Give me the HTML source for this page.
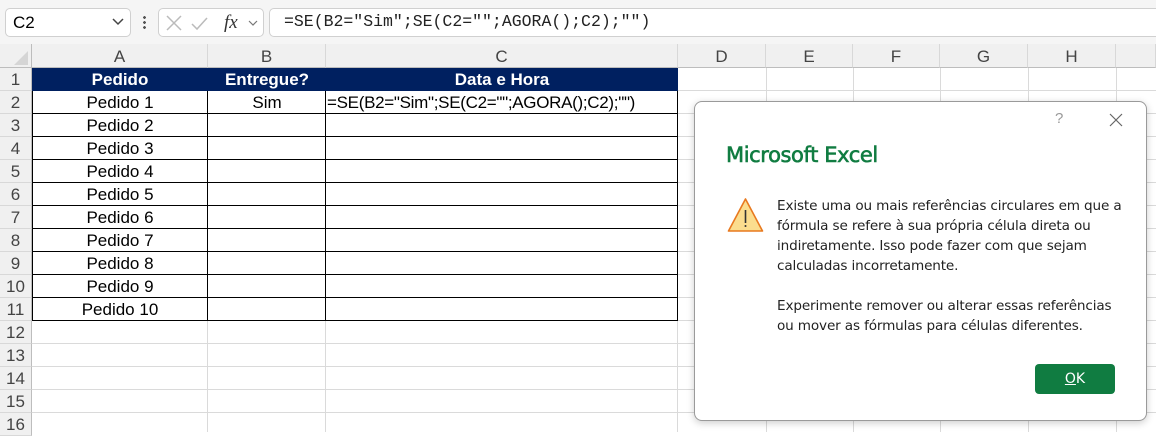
<!DOCTYPE html>
<html><head><meta charset="utf-8"><style>
*{margin:0;padding:0;box-sizing:border-box}
body{width:1156px;height:432px;overflow:hidden;background:#fff;font-family:"Liberation Sans",Arial,sans-serif;position:relative}
.abs{position:absolute}
.top{left:0;top:0;width:1156px;height:44px;background:#f5f5f5}
.box{background:#fff;border:1px solid #d0d0d0;border-radius:5px}
.colh{top:44px;height:24px;background:#f0f0f0;border-bottom:1px solid #bdbdbd;font-size:17px;color:#444;text-align:center;line-height:26px;border-right:1px solid #d8d8d8}
.rowh{left:0;width:32px;height:23px;background:#f0f0f0;border-bottom:1px solid #d8d8d8;border-right:1px solid #bdbdbd;font-size:17px;color:#444;text-align:center;line-height:23px}
.vl{top:68px;width:1px;height:364px;background:#dadada}
.hl{left:32px;width:1124px;height:1px;background:#dadada}
.cell{height:23px;font-size:17px;line-height:23px;text-align:center;color:#000}
</style></head><body>
<div class="abs top"></div>
<div class="abs box" style="left:5px;top:8px;width:126px;height:29px"></div>
<div class="abs" style="left:13px;top:13px;font-size:17px">C2</div>
<svg class="abs" style="left:112px;top:18px" width="12" height="8"><path d="M1 1l5 5 5-5" stroke="#444" stroke-width="1.5" fill="none"/></svg>
<div class="abs" style="left:143px;top:15px;width:3px;height:15px;background:radial-gradient(circle,#555 1.3px,transparent 1.5px) 0 0/3px 5px"></div>
<div class="abs box" style="left:158px;top:8px;width:106px;height:29px"></div>
<svg class="abs" style="left:164px;top:13px" width="100" height="20"><path d="M3 3l14 14M17 3L3 17" stroke="#bbb" stroke-width="1.5"/><path d="M28 11l5 5 10-11" stroke="#bbb" stroke-width="1.5" fill="none"/><text x="60" y="15" font-family="Liberation Serif" font-style="italic" font-size="19" fill="#333">fx</text><path d="M85 8l4 4 4-4" stroke="#777" stroke-width="1.2" fill="none"/></svg>
<div class="abs box" style="left:269px;top:8px;width:900px;height:29px"></div>
<div class="abs" style="left:284px;top:12px;font-family:'Liberation Mono',monospace;font-size:16.5px;color:#222">=SE(B2="Sim";SE(C2="";AGORA();C2);"")</div>
<div class="abs" style="left:0;top:44px;width:32px;height:24px;background:#f0f0f0;border-right:1px solid #bdbdbd;border-bottom:1px solid #bdbdbd"></div>
<svg class="abs" style="left:14px;top:51px" width="14" height="14"><path d="M14 0V14H0z" fill="#d5d5d5"/></svg>
<div class="abs colh" style="left:32px;width:176px">A</div>
<div class="abs colh" style="left:208px;width:118px">B</div>
<div class="abs colh" style="left:326px;width:352px">C</div>
<div class="abs colh" style="left:678px;width:88px">D</div>
<div class="abs colh" style="left:766px;width:87px">E</div>
<div class="abs colh" style="left:853px;width:87px">F</div>
<div class="abs colh" style="left:940px;width:88px">G</div>
<div class="abs colh" style="left:1028px;width:88px">H</div>
<div class="abs colh" style="left:1116px;width:40px"></div>
<div class="abs vl" style="left:766px"></div><div class="abs vl" style="left:853px"></div><div class="abs vl" style="left:940px"></div><div class="abs vl" style="left:1028px"></div><div class="abs vl" style="left:1116px"></div>
<div class="abs vl" style="left:207px;top:321px;height:111px"></div><div class="abs vl" style="left:325px;top:321px;height:111px"></div><div class="abs vl" style="left:677px;top:321px;height:111px"></div>
<div class="abs rowh" style="top:68px">1</div><div class="abs rowh" style="top:91px">2</div><div class="abs rowh" style="top:114px">3</div><div class="abs rowh" style="top:137px">4</div><div class="abs rowh" style="top:160px">5</div><div class="abs rowh" style="top:183px">6</div><div class="abs rowh" style="top:206px">7</div><div class="abs rowh" style="top:229px">8</div><div class="abs rowh" style="top:252px">9</div><div class="abs rowh" style="top:275px">10</div><div class="abs rowh" style="top:298px">11</div><div class="abs rowh" style="top:321px">12</div><div class="abs rowh" style="top:344px">13</div><div class="abs rowh" style="top:367px">14</div><div class="abs rowh" style="top:390px">15</div><div class="abs rowh" style="top:413px">16</div>
<div class="abs hl" style="top:90px"></div><div class="abs hl" style="top:113px"></div><div class="abs hl" style="top:136px"></div><div class="abs hl" style="top:159px"></div><div class="abs hl" style="top:182px"></div><div class="abs hl" style="top:205px"></div><div class="abs hl" style="top:228px"></div><div class="abs hl" style="top:251px"></div><div class="abs hl" style="top:274px"></div><div class="abs hl" style="top:297px"></div><div class="abs hl" style="top:320px"></div><div class="abs hl" style="top:343px"></div><div class="abs hl" style="top:366px"></div><div class="abs hl" style="top:389px"></div><div class="abs hl" style="top:412px"></div>
<div class="abs" style="left:32px;top:68px;width:646px;height:23px;background:#002060"></div>
<div class="abs cell" style="left:32px;top:68px;width:176px;color:#fff;font-weight:bold">Pedido</div>
<div class="abs cell" style="left:208px;top:68px;width:118px;color:#fff;font-weight:bold">Entregue?</div>
<div class="abs cell" style="left:326px;top:68px;width:352px;color:#fff;font-weight:bold">Data e Hora</div>
<div class="abs" style="left:32px;top:91px;width:646px;height:230px;background:#fff;border:1px solid #000;border-top:none"></div>
<div class="abs" style="left:207px;top:91px;width:1px;height:230px;background:#000"></div>
<div class="abs" style="left:325px;top:91px;width:1px;height:230px;background:#000"></div>
<div class="abs" style="left:32px;top:113px;width:646px;height:1px;background:#000;box-shadow:0 23px #000,0 46px #000,0 69px #000,0 92px #000,0 115px #000,0 138px #000,0 161px #000,0 184px #000"></div>
<div class="abs cell" style="left:32px;top:91px;width:176px">Pedido 1</div>
<div class="abs cell" style="left:32px;top:114px;width:176px">Pedido 2</div>
<div class="abs cell" style="left:32px;top:137px;width:176px">Pedido 3</div>
<div class="abs cell" style="left:32px;top:160px;width:176px">Pedido 4</div>
<div class="abs cell" style="left:32px;top:183px;width:176px">Pedido 5</div>
<div class="abs cell" style="left:32px;top:206px;width:176px">Pedido 6</div>
<div class="abs cell" style="left:32px;top:229px;width:176px">Pedido 7</div>
<div class="abs cell" style="left:32px;top:252px;width:176px">Pedido 8</div>
<div class="abs cell" style="left:32px;top:275px;width:176px">Pedido 9</div>
<div class="abs cell" style="left:32px;top:298px;width:176px">Pedido 10</div>
<div class="abs cell" style="left:208px;top:91px;width:118px">Sim</div>
<div class="abs cell" style="left:327px;top:91px;text-align:left;white-space:nowrap;letter-spacing:-0.3px">=SE(B2="Sim";SE(C2="";AGORA();C2);"")</div>
<div class="abs" style="left:694px;top:101px;width:453px;height:320px;background:#fff;border:1px solid #9a9a9a;border-radius:8px;box-shadow:0 2px 8px rgba(0,0,0,.2)"></div>
<div class="abs" style="left:1055px;top:110px;font-size:15px;color:#999">?</div>
<svg class="abs" style="left:1109px;top:113px" width="14" height="14"><path d="M1 1l12 12M13 1L1 13" stroke="#666" stroke-width="1.2"/></svg>
<div class="abs" style="left:726px;top:143px;font-size:21px;color:#107c41;font-family:'DejaVu Sans',sans-serif;letter-spacing:-0.4px;-webkit-text-stroke:0.6px #107c41">Microsoft Excel</div>
<svg class="abs" style="left:727px;top:197px" width="38" height="36"><path d="M18.5 2L1.5 34h34z" fill="#fbdd8e" stroke="#e8791f" stroke-width="1.6" stroke-linejoin="round"/><path d="M18.5 13v13" stroke="#333" stroke-width="1.6"/><circle cx="18.5" cy="29" r="1" fill="#333"/></svg>
<div class="abs" style="left:777px;top:196px;width:350px;font-family:'DejaVu Sans',sans-serif;font-size:13.6px;line-height:20px;color:#222;letter-spacing:-0.15px">Existe uma ou mais referências circulares em que a fórmula se refere à sua própria célula direta ou indiretamente. Isso pode fazer com que sejam calculadas incorretamente.<br><br>Experimente remover ou alterar essas referências<br>ou mover as fórmulas para células diferentes.</div>
<div class="abs" style="left:1035px;top:364px;width:80px;height:30px;background:#107c41;border-radius:4px;color:#fff;font-family:'DejaVu Sans',sans-serif;font-size:14px;text-align:center;line-height:30px"><u>O</u>K</div>
</body></html>
